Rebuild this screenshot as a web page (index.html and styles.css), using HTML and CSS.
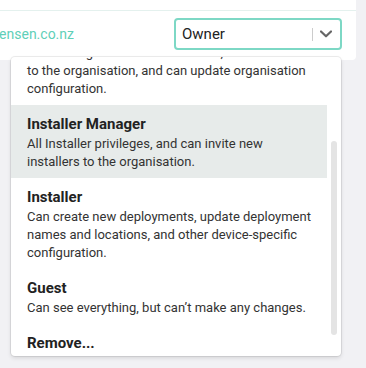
FILE: index.html
```html
<!DOCTYPE html>
<html lang="en">
<head>
<meta charset="utf-8">
<title>Member role</title>
<link rel="stylesheet" href="styles.css">
</head>
<body>
<div class="page">
  <div class="card">
    <div class="card-top"></div>
    <div class="member-row">
      <div class="email-cell"><span class="email">tom@jensen.co.nz</span></div>
      <div class="select">
        <div class="select-value">Owner</div>
        <span class="select-sep"></span>
        <span class="select-indicator">
          <svg width="12" height="8" viewBox="0 0 12 8"><polyline points="1,1.5 6,6.3 11,1.5" fill="none" stroke="#666" stroke-width="2.2" stroke-linecap="round" stroke-linejoin="round"/></svg>
        </span>
      </div>
    </div>
  </div>
  <div class="menu">
    <ul class="menu-list">
      <li class="menu-item">
        <div class="item-title">Owner</div>
        <div class="item-desc">Full access, including billing and deleting the organisation itself.</div>
      </li>
      <li class="menu-item">
        <div class="item-title">Administrator</div>
        <div class="item-desc">Can manage users and their roles, and add staff to the organisation, and can update organisation configuration.</div>
      </li>
      <li class="menu-item is-active">
        <div class="item-title">Installer Manager</div>
        <div class="item-desc">All Installer privileges, and can invite new installers to the organisation.</div>
      </li>
      <li class="menu-item">
        <div class="item-title">Installer</div>
        <div class="item-desc">Can create new deployments, update deployment names and locations, and other device-specific configuration.</div>
      </li>
      <li class="menu-item">
        <div class="item-title">Guest</div>
        <div class="item-desc">Can see everything, but can’t make any changes.</div>
      </li>
      <li class="menu-item">
        <div class="item-title">Remove...</div>
      </li>
    </ul>
    <span class="menu-thumb"></span>
  </div>
</div>
<script src="menu.js"></script>
</body>
</html>
```

FILE: styles.css
```css
* { box-sizing: border-box; }

body {
  margin: 0;
  background: #f1f1f4;
  font-family: Roboto, "Liberation Sans", sans-serif;
}

.page {
  position: relative;
  height: 368px;
  overflow: hidden;
}

.card {
  width: 356px;
  background: #fff;
  border-radius: 0 0 4px 0;
}

.card-top {
  height: 11px;
  border-bottom: 1px solid #e4f1ee;
}

.member-row {
  display: flex;
  justify-content: space-between;
  align-items: flex-start;
  height: 49px;
  padding: 7px 14px 0 0;
}

.email-cell {
  width: 74px;
  height: 32px;
  overflow: hidden;
  display: flex;
  justify-content: flex-end;
  align-items: center;
  white-space: nowrap;
}

.email {
  font-size: 14px;
  color: #5fcfb8;
  flex: none;
}

.select {
  width: 168px;
  height: 32px;
  border: 2px solid #7dd8c5;
  border-radius: 4px;
  display: flex;
  align-items: center;
  background: #fff;
}

.select-value {
  flex: 1;
  padding-left: 6px;
  font-size: 15px;
  color: #222;
}

.select-sep {
  width: 1px;
  height: 13px;
  background: #cccccc;
}

.select-indicator {
  width: 27px;
  display: flex;
  justify-content: center;
  padding-right: 1px;
}

.select-indicator svg { display: block; }

.menu {
  position: absolute;
  left: 11px;
  top: 57px;
  width: 330px;
  height: 299px;
  background: #fff;
  border-radius: 4px;
  box-shadow: 0 0 0 1px rgba(0, 0, 0, 0.07), 0 2px 4px rgba(0, 0, 0, 0.12);
  overflow: hidden;
}

.menu-list {
  list-style: none;
  margin: 0 14px 0 0;
  padding: 10px 0 28px;
  height: 100%;
  overflow: hidden;
}

.menu-thumb {
  position: absolute;
  right: 4px;
  top: 84px;
  width: 6px;
  height: 194px;
  border-radius: 3px;
  background: #e4e4e4;
}

.menu-item {
  padding: 8px 15px 7px 16px;
}

.menu-item.is-active { background: #e7ebea; }

.item-title {
  font-size: 15px;
  line-height: 22px;
  font-weight: 700;
  color: #222;
}

.item-desc {
  font-size: 13px;
  line-height: 18px;
  color: #333;
}
```

FILE: menu.js
```js
document.querySelector('.menu-list').scrollTop = 126;
```
